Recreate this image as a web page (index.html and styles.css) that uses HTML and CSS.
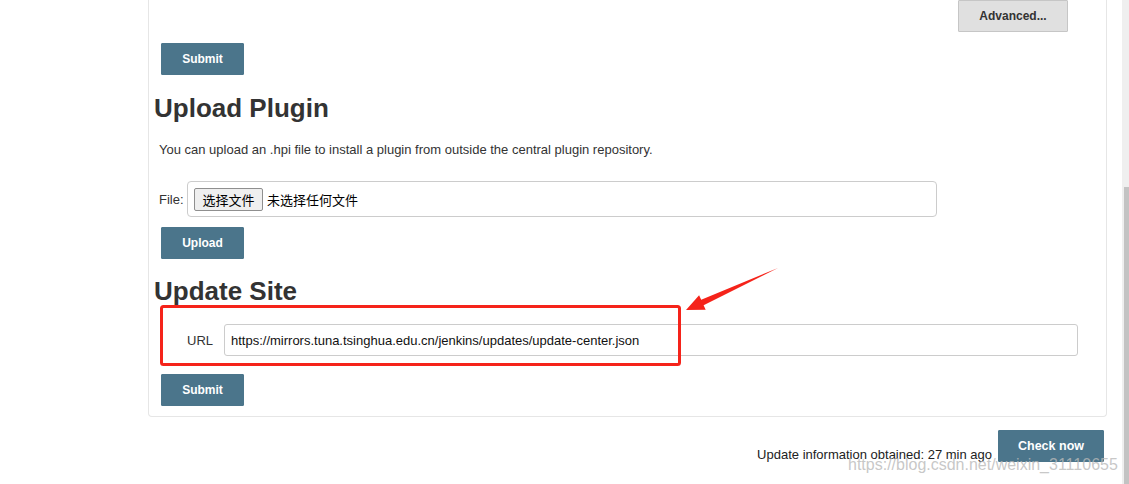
FILE: index.html
```html
<!DOCTYPE html>
<html lang="en">
<head>
<meta charset="utf-8">
<title>Plugin Manager - Advanced</title>
<link rel="stylesheet" href="styles.css">
</head>
<body>
<div class="page">
  <div class="main">
    <div class="panel">
      <div class="adv-row"><button class="btn-adv">Advanced...</button></div>
      <button class="btn btn-first">Submit</button>

      <h2 class="section-title">Upload Plugin</h2>
      <p class="desc">You can upload an .hpi file to install a plugin from outside the central plugin repository.</p>
      <div class="file-row">
        <span class="file-label">File:</span>
        <div class="file-box">
          <span class="file-btn">选择文件</span>
          <span class="file-none">未选择任何文件</span>
        </div>
      </div>
      <button class="btn btn-upload">Upload</button>

      <h2 class="section-title title-site">Update Site</h2>
      <div class="url-row">
        <span class="url-label">URL</span>
        <div class="url-input">https://mirrors.tuna.tsinghua.edu.cn/jenkins/updates/update-center.json</div>
      </div>
      <button class="btn btn-site">Submit</button>
    </div>
    <div class="footer-row">
      <span class="footer-info">Update information obtained: 27 min ago</span>
      <button class="btn btn-check">Check now</button>
    </div>
  </div>
  <div class="scrollbar"><div class="thumb"></div></div>
</div>

<svg class="annot" width="1129" height="484" viewBox="0 0 1129 484">
  <rect x="161.5" y="306.5" width="518" height="58" rx="2" fill="none" stroke="#f5231a" stroke-width="3"/>
  <polygon points="778,268 701.2,299.8 699.1,295.2 686,310 705.7,309.8 703.6,305.2" fill="#f5231a"/>
</svg>
<div class="watermark">https://blog.csdn.net/weixin_31110655</div>
</body>
</html>
```

FILE: styles.css
```css
html, body {
  margin: 0;
  padding: 0;
}
body {
  width: 1129px;
  height: 484px;
  overflow: hidden;
  background: #fff;
  font-family: "Liberation Sans", Arial, "Noto Sans CJK SC", sans-serif;
  color: #333;
  position: relative;
}
.page {
  display: flex;
  height: 484px;
}
.main {
  flex: 1;
  padding: 0 15px 0 148px;
}
.panel {
  border: 1px solid #e6e6e6;
  border-top: none;
  border-radius: 0 0 4px 4px;
  padding: 0 0 10px 3px;
  display: flex;
  flex-direction: column;
  align-items: flex-start;
}
.adv-row {
  align-self: stretch;
  display: flex;
  justify-content: flex-end;
  padding-right: 38px;
}
.btn-adv {
  height: 32px;
  width: 110px;
  background: #e0e0e0;
  border: 1px solid #c6c6c6;
  border-radius: 1px;
  color: #333;
  font-family: inherit;
  font-weight: bold;
  font-size: 12px;
  padding: 0;
}
.btn {
  height: 32px;
  width: 83px;
  background: #4b758b;
  border: 1px solid #4b758b;
  border-radius: 1px;
  color: #fff;
  font-family: inherit;
  font-weight: bold;
  font-size: 12px;
  padding: 0;
  margin-left: 9px;
}
.btn-first { margin-top: 11px; }
.section-title {
  margin: 18px 0 0 2px;
  font-size: 26px;
  line-height: 30px;
  font-weight: bold;
  color: #333;
}
.desc {
  margin: 19px 0 0 7px;
  font-size: 13px;
  line-height: 16px;
  color: #333;
}
.file-row {
  margin: 23px 0 0 7px;
  display: flex;
  align-items: center;
  font-size: 13px;
}
.file-label {
  width: 28px;
}
.file-box {
  box-sizing: border-box;
  width: 750px;
  height: 36px;
  border: 1px solid #ccc;
  border-radius: 4px;
  display: flex;
  align-items: center;
  padding-left: 6px;
}
.file-btn {
  box-sizing: border-box;
  height: 23px;
  width: 69px;
  display: flex;
  align-items: center;
  justify-content: center;
  background: #efefef;
  border: 1px solid #8f8f8f;
  border-radius: 2px;
  color: #000;
  font-family: "Noto Sans CJK SC", sans-serif;
  font-size: 13px;
}
.file-none {
  margin-left: 4px;
  color: #000;
  font-family: "Noto Sans CJK SC", sans-serif;
  font-size: 13px;
}
.btn-upload { margin-top: 10px; }
.title-site { margin-top: 17px; }
.url-row {
  align-self: stretch;
  margin: 18px 28px 0 0;
  display: flex;
  align-items: center;
  font-size: 13px;
}
.url-label {
  width: 37px;
  margin-left: 35px;
  color: #333;
}
.url-input {
  flex: 1;
  box-sizing: border-box;
  height: 32px;
  border: 1px solid #ccc;
  border-radius: 3px;
  display: flex;
  align-items: center;
  padding-left: 6px;
  color: #111;
}
.btn-site { margin-top: 18px; }
.footer-row {
  display: flex;
  justify-content: flex-end;
  align-items: flex-end;
  margin-top: 13px;
  padding-right: 3px;
}
.footer-info {
  font-size: 13px;
  color: #222;
  margin-right: 6px;
}
.btn-check {
  width: 106px;
  height: 32px;
  margin-left: 0;
  font-size: 12.5px;
}
.scrollbar {
  width: 7px;
  background: #efefef;
  display: flex;
  flex-direction: column;
}
.thumb {
  margin-top: 187px;
  margin-left: 2px;
  flex: 1;
  background: #c3c3c3;
}
.annot {
  position: absolute;
  left: 0;
  top: 0;
  pointer-events: none;
}
.watermark {
  position: absolute;
  left: 848px;
  top: 456px;
  font-size: 16px;
  line-height: 18px;
  color: rgba(185, 185, 185, 0.8);
  white-space: nowrap;
}
```
